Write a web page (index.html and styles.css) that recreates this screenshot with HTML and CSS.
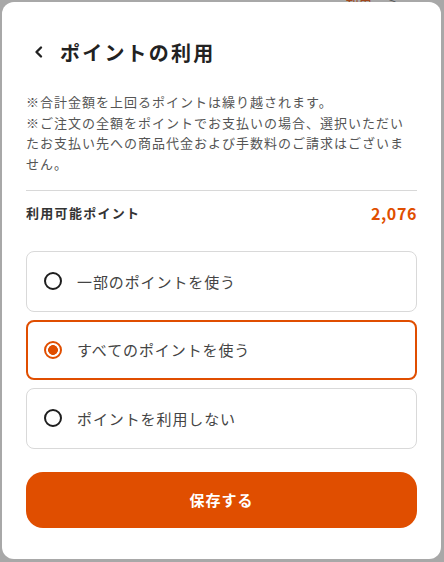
FILE: index.html
```html
<!DOCTYPE html>
<html lang="ja">
<head>
  <meta charset="UTF-8">
  <meta name="viewport" content="width=device-width, initial-scale=1.0">
  <title>ポイントの利用</title>
  <link rel="stylesheet" href="styles.css">
</head>
<body>
  <div class="backdrop">
    <div class="behind">利用 <span class="behind-arrow">&gt;</span></div>
    <div class="modal">
      <div class="modal-head">
        <svg class="back" width="12" height="14" viewBox="0 0 12 14"><path d="M8 2.5 L3.5 7 L8 11.5" fill="none" stroke="#222" stroke-width="2.4" stroke-linecap="round" stroke-linejoin="round"/></svg>
        <h1>ポイントの利用</h1>
      </div>

      <p class="note">※合計金額を上回るポイントは繰り越されます。<br>※ご注文の全額をポイントでお支払いの場合、選択いただいたお支払い先への商品代金および手数料のご請求はございません。</p>

      <div class="avail">
        <span class="avail-label">利用可能ポイント</span>
        <span class="avail-value">2,076</span>
      </div>

      <div class="options">
        <label class="option"><span class="radio"></span>一部のポイントを使う</label>
        <label class="option selected"><span class="radio"></span>すべてのポイントを使う</label>
        <label class="option"><span class="radio"></span>ポイントを利用しない</label>
      </div>

      <button class="save">保存する</button>
    </div>
  </div>
</body>
</html>
```

FILE: styles.css
```css
* {
  box-sizing: border-box;
}
body {
  margin: 0;
  font-family: "Noto Sans CJK JP", "Noto Sans", sans-serif;
  background: #a8a8a8;
}
.backdrop {
  position: relative;
  height: 562px;
  padding: 2px 3px 3px 2px;
}
.behind {
  position: absolute;
  top: -8px;
  right: 48px;
  font-size: 13px;
  color: #a0481c;
}
.behind-arrow {
  color: #555;
  margin-left: 14px;
}
.modal {
  position: relative;
  height: 557px;
  background: #fff;
  border-radius: 12px;
  padding: 28px 24px 0 24px;
}
.modal-head {
  display: flex;
  align-items: center;
  height: 44px;
  padding-left: 7px;
}
.back {
  margin-right: 15px;
}
.modal-head h1 {
  margin: 0;
  font-size: 20px;
  font-weight: 700;
  color: #222;
  letter-spacing: 2.2px;
}
.note {
  margin: 18px 0 0;
  font-size: 13px;
  line-height: 20.7px;
  letter-spacing: 1px;
  color: #555;
  padding-bottom: 15px;
  border-bottom: 1px solid #d8d8d8;
}
.avail {
  display: flex;
  justify-content: space-between;
  align-items: center;
  margin-top: 10px;
  height: 24px;
}
.avail-label {
  font-size: 13px;
  font-weight: 700;
  letter-spacing: 1.3px;
  color: #333;
}
.avail-value {
  font-size: 16px;
  font-weight: 700;
  letter-spacing: 0.6px;
  color: #e04e00;
}
.options {
  display: flex;
  flex-direction: column;
  gap: 8px;
  margin-top: 26px;
}
.option {
  display: flex;
  align-items: center;
  height: 61px;
  border: 1px solid #d9d9d9;
  border-radius: 8px;
  padding-left: 17px;
  font-size: 15px;
  color: #444;
  letter-spacing: 0.9px;
}
.option.selected {
  border: 2px solid #e04e00;
  padding-left: 16px;
  height: 60px;
}
.radio {
  width: 18px;
  height: 18px;
  border: 2px solid #1e1e1e;
  border-radius: 50%;
  margin-right: 15px;
  flex-shrink: 0;
}
.selected .radio {
  border-color: #e04e00;
  background: radial-gradient(circle, #e04e00 0 4.6px, #fff 5.2px);
}
.save {
  display: block;
  width: 100%;
  height: 56px;
  margin-top: 23px;
  border: none;
  border-radius: 17px;
  background: #e04e00;
  color: #fff;
  font-family: inherit;
  font-size: 15px;
  font-weight: 700;
  letter-spacing: 1px;
}
```
